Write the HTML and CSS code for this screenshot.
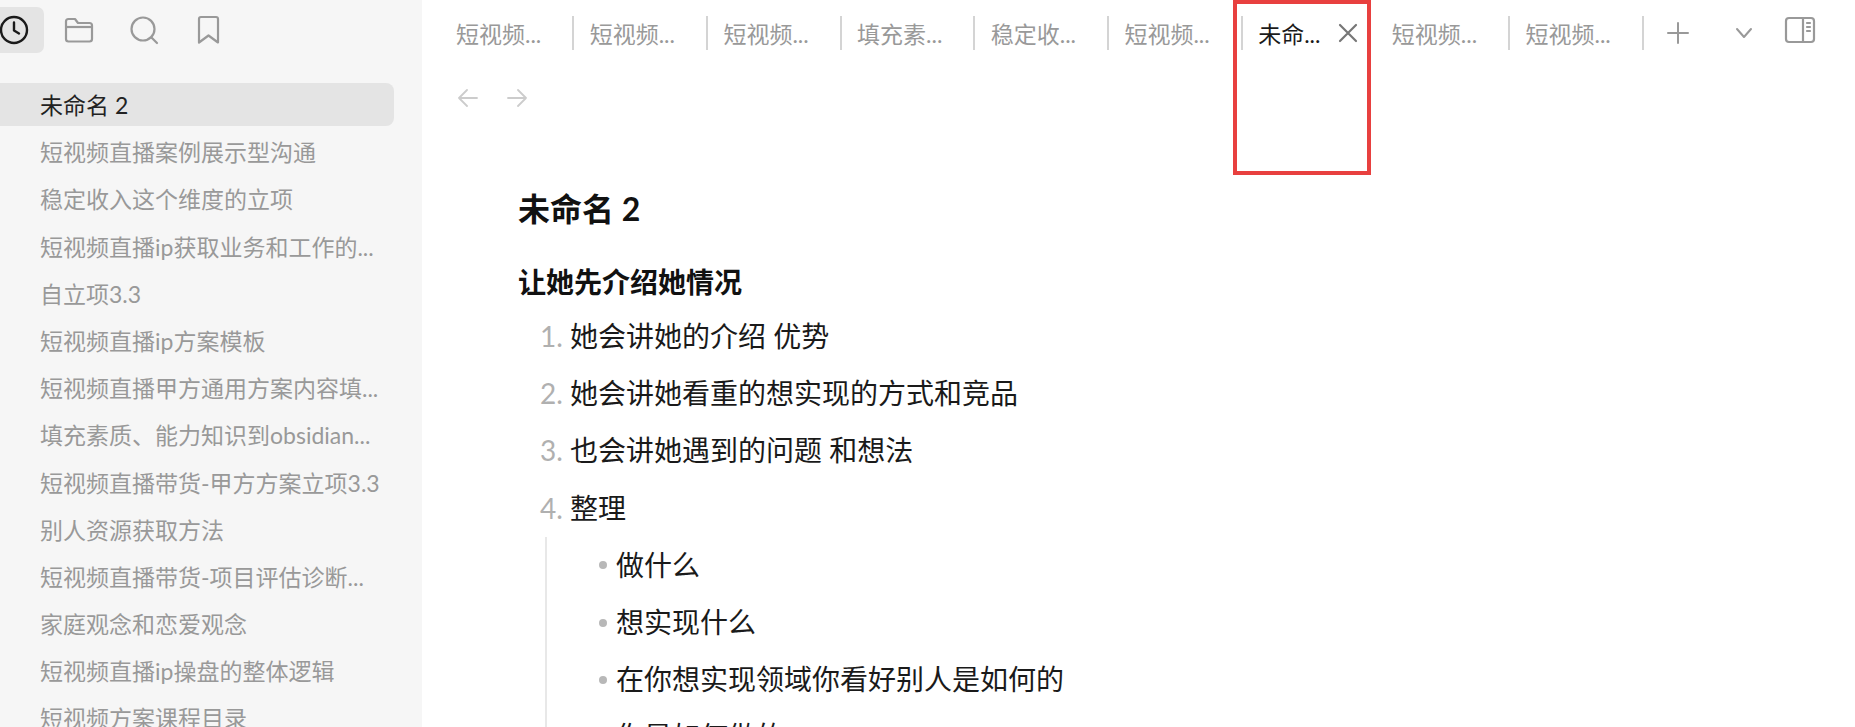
FILE: index.html
```html
<!DOCTYPE html>
<html lang="zh-CN">
<head>
    <meta charset="UTF-8">
    <meta name="viewport" content="width=device-width, initial-scale=1.0">
    <title>未命名 2</title>
    <link rel="stylesheet" href="styles.css">
</head>
<body>
    <div class="app">
        <aside class="sidebar">
            <div class="side-tools">
                <button class="tool active">
                    <svg width="30" height="30" viewBox="0 0 30 30" fill="none" stroke="currentColor" stroke-width="2.4" stroke-linecap="round" stroke-linejoin="round"><circle cx="15" cy="15" r="13"/><path d="M15 7.5V15.5L20 18.5"/></svg>
                </button>
                <button class="tool">
                    <svg width="30" height="30" viewBox="0 0 30 30" fill="none" stroke="currentColor" stroke-width="2.2" stroke-linejoin="round"><path d="M2 6.5a2.5 2.5 0 0 1 2.5-2.5H11l3 4h11.5A2.5 2.5 0 0 1 28 10.500V24a2.500 2.500 0 0 1-2.500 2.500h-21A2.500 2.500 0 0 1 2 24Z"/><path d="M2 12H28"/></svg>
                </button>
                <button class="tool">
                    <svg width="30" height="30" viewBox="0 0 30 30" fill="none" stroke="currentColor" stroke-width="2.2" stroke-linecap="round"><circle cx="14" cy="14" r="11.500"/><path d="M22.500 22.500L28 28"/></svg>
                </button>
                <button class="tool">
                    <svg width="30" height="30" viewBox="0 0 30 30" fill="none" stroke="currentColor" stroke-width="2.2" stroke-linejoin="round"><path d="M5 4a2 2 0 0 1 2-2h15a2 2 0 0 1 2 2V27.500L14.500 20.500 5 27.500Z"/></svg>
                </button>
            </div>
            <ul class="file-list">
                <li class="file current">未命名 2</li>
                <li class="file">短视频直播案例展示型沟通</li>
                <li class="file">稳定收入这个维度的立项</li>
                <li class="file">短视频直播ip获取业务和工作的...</li>
                <li class="file">自立项3.3</li>
                <li class="file">短视频直播ip方案模板</li>
                <li class="file">短视频直播甲方通用方案内容填...</li>
                <li class="file">填充素质、能力知识到obsidian...</li>
                <li class="file">短视频直播带货-甲方方案立项3.3</li>
                <li class="file">别人资源获取方法</li>
                <li class="file">短视频直播带货-项目评估诊断...</li>
                <li class="file">家庭观念和恋爱观念</li>
                <li class="file">短视频直播ip操盘的整体逻辑</li>
                <li class="file">短视频方案课程目录</li>
            </ul>
        </aside>

        <main class="main">
            <div class="tabbar">
                <div class="tab">短视频...</div>
                <div class="tab">短视频...</div>
                <div class="tab">短视频...</div>
                <div class="tab">填充素...</div>
                <div class="tab">稳定收...</div>
                <div class="tab">短视频...</div>
                <div class="tab tab-active">
                    未命...
                    <svg class="tab-close" width="20" height="20" viewBox="0 0 20 20" fill="none" stroke="currentColor" stroke-width="2.200" stroke-linecap="round"><path d="M2 2L18 18M18 2L2 18"/></svg>
                    <div class="highlight"></div>
                </div>
                <div class="tab">短视频...</div>
                <div class="tab">短视频...</div>
                <div class="tab-actions">
                    <svg class="add" width="22" height="22" viewBox="0 0 22 22" fill="none" stroke="currentColor" stroke-width="2" stroke-linecap="round"><path d="M11 1V21M1 11H21"/></svg>
                    <svg class="more" width="18" height="12" viewBox="0 0 18 12" fill="none" stroke="currentColor" stroke-width="2" stroke-linecap="round" stroke-linejoin="round"><path d="M2 2L9 10L16 2"/></svg>
                    <svg class="panel" width="32" height="28" viewBox="0 0 32 28" fill="none" stroke="currentColor" stroke-width="2.200" stroke-linecap="round" stroke-linejoin="round"><rect x="2" y="2" width="28" height="24" rx="3"/><path d="M19 2V26M23 7H26M23 11H26M23 15H26"/></svg>
                </div>
            </div>

            <div class="nav">
                <svg width="20" height="18" viewBox="0 0 20 18" fill="none" stroke="currentColor" stroke-width="1.800" stroke-linecap="round" stroke-linejoin="round"><path d="M19 9H1M9 1L1 9L9 17"/></svg>
                <svg width="20" height="18" viewBox="0 0 20 18" fill="none" stroke="currentColor" stroke-width="1.800" stroke-linecap="round" stroke-linejoin="round"><path d="M1 9H19M11 1L19 9L11 17"/></svg>
            </div>

            <article class="note">
                <h1>未命名 2</h1>
                <h2>让她先介绍她情况</h2>
                <ol>
                    <li>她会讲她的介绍 优势</li>
                    <li>她会讲她看重的想实现的方式和竞品</li>
                    <li>也会讲她遇到的问题 和想法</li>
                    <li>整理
                        <ul>
                            <li>做什么</li>
                            <li>想实现什么</li>
                            <li>在你想实现领域你看好别人是如何的</li>
                            <li>你是如何做的</li>
                        </ul>
                    </li>
                </ol>
            </article>
        </main>
    </div>
</body>
</html>
```

FILE: styles.css
```css
* {
    box-sizing: border-box;
}
html, body {
    margin: 0;
    height: 100%;
    overflow: hidden;
}
body {
    font-family: Lato, "Noto Sans CJK SC", sans-serif;
    background-color: #fff;
    color: #1a1a1a;
}
.app {
    display: flex;
    height: 727px;
    overflow: hidden;
}

/* left panel */
.sidebar {
    flex: 0 0 422px;
    background-color: #f6f6f6;
    overflow: hidden;
}
.side-tools {
    display: flex;
    gap: 5px;
    margin: 7px 0 0 -16px;
}
.tool {
    width: 60px;
    height: 46px;
    padding: 0;
    border: none;
    border-radius: 7px;
    background: none;
    color: #999;
    display: flex;
    align-items: center;
    justify-content: center;
}
.tool.active {
    background-color: #e4e4e4;
    color: #1a1a1a;
}
.file-list {
    list-style: none;
    margin: 30px 0 0 -8px;
    padding: 0;
    width: 402px;
    display: flex;
    flex-direction: column;
    gap: 4.2px;
}
.file {
    height: 43px;
    padding: 0 0 0 48px;
    border-radius: 8px;
    font-size: 23px;
    line-height: 45px;
    white-space: nowrap;
    color: #999;
}
.file.current {
    background-color: #e4e4e4;
    color: #222;
}

/* tabs and note */
.main {
    flex: 1;
    min-width: 0;
}
.tabbar {
    display: flex;
    padding: 16px 0 0 18.5px;
    height: 50px;
}
.tab {
    position: relative;
    flex: 0 0 133.7px;
    height: 34px;
    padding: 0 0 0 15.5px;
    border-right: 2px solid #d4d4d4;
    display: flex;
    align-items: center;
    font-size: 23px;
    white-space: nowrap;
    color: #999;
}
.tab-active {
    border-right: none;
    color: #1a1a1a;
}
.tab-close {
    margin-left: 18px;
    color: #777;
}
.highlight {
    position: absolute;
    top: -16px;
    left: -10px;
    width: 138px;
    height: 175px;
    border: 4px solid #e8403f;
}
.tab-actions {
    display: flex;
    align-items: center;
    color: #999;
    height: 34px;
}
.add {
    margin-left: 23px;
}
.more {
    margin-left: 46px;
}
.panel {
    margin-left: 31px;
    margin-top: -6px;
}
.nav {
    display: flex;
    gap: 29px;
    align-items: center;
    height: 30px;
    margin: 33px 0 0 36px;
    color: #ccc;
}
.note {
    padding-left: 96px;
}
h1 {
    margin: 74px 0 0;
    font-size: 32px;
    line-height: 44px;
    font-weight: 700;
    color: #111;
}
h2 {
    margin: 31px 0 0;
    font-size: 28px;
    line-height: 40px;
    font-weight: 700;
    color: #111;
}
ol {
    margin: 6px 0 0;
    padding: 0 0 0 52px;
    font-size: 28px;
    line-height: 57.200px;
}
ol > li::marker {
    color: #b0b0b0;
}
ol ul {
    list-style: none;
    margin: 0 0 0 -25px;
    padding: 0 0 0 52px;
    border-left: 2px solid #e8e8e8;
}
ol ul li {
    display: flex;
    align-items: center;
    gap: 9px;
}
ol ul li::before {
    content: "";
    width: 8px;
    height: 8px;
    border-radius: 50%;
    background-color: #b8b8b8;
}
```
